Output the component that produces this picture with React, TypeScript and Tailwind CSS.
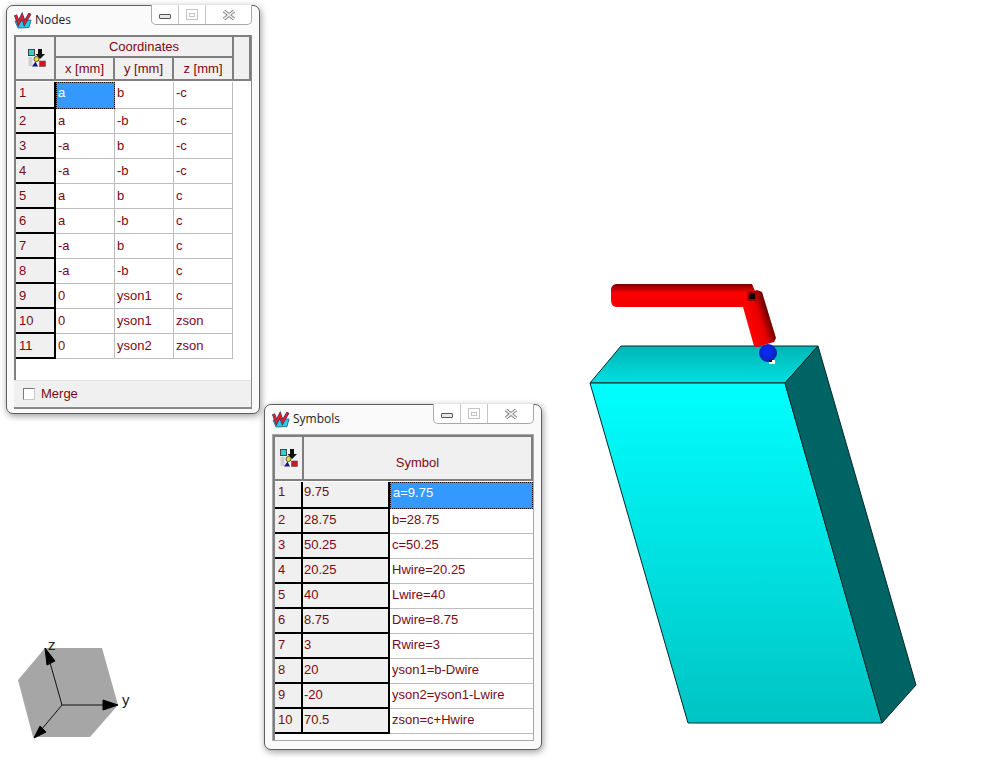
import type { ReactNode } from "react";

const nodes = [
  ["a", "b", "-c"],
  ["a", "-b", "-c"],
  ["-a", "b", "-c"],
  ["-a", "-b", "-c"],
  ["a", "b", "c"],
  ["a", "-b", "c"],
  ["-a", "b", "c"],
  ["-a", "-b", "c"],
  ["0", "yson1", "c"],
  ["0", "yson1", "zson"],
  ["0", "yson2", "zson"],
];

const symbols = [
  ["9.75", "a=9.75"],
  ["28.75", "b=28.75"],
  ["50.25", "c=50.25"],
  ["20.25", "Hwire=20.25"],
  ["40", "Lwire=40"],
  ["8.75", "Dwire=8.75"],
  ["3", "Rwire=3"],
  ["20", "yson1=b-Dwire"],
  ["-20", "yson2=yson1-Lwire"],
  ["70.5", "zson=c+Hwire"],
];

function AppIcon() {
  return (
    <svg width="18" height="17" viewBox="0 0 18 17" className="shrink-0">
      <path d="M1 9 L17 8 L15 15.5 L4 16 Z" fill="#2ccbe0" stroke="#0b5f78" strokeWidth="0.8" />
      <path d="M1.5 3 L4.5 11 L8 4 L10.5 11 L16 1.5" fill="none" stroke="#16306e" strokeWidth="3.2" />
      <path d="M1.5 3 L4.5 11 L8 4 L10.5 11 L16 1.5" fill="none" stroke="#d8232c" strokeWidth="2.2" />
    </svg>
  );
}

function GridIcon() {
  return (
    <svg width="18" height="18" viewBox="0 0 18 18">
      <rect x="0.5" y="0.5" width="6" height="6" fill="#2fd0d0" stroke="#444" />
      <rect x="0.5" y="8" width="4" height="9" fill="#cfcfcf" />
      <path d="M10 0 H14 V5 H17 L12 10 L7.5 5 H10 Z" fill="#111" />
      <circle cx="8.5" cy="10" r="2.5" fill="#e6e23a" stroke="#333" strokeWidth="0.8" />
      <path d="M4 17.5 L7.5 12.5 L10 17.5 Z" fill="#16168c" />
      <rect x="11.5" y="12" width="6" height="5.5" fill="#d01420" stroke="#555" strokeWidth="0.6" />
    </svg>
  );
}

function CaptionButtons({ className }: { className: string }) {
  return (
    <div className={`absolute top-[-1px] flex h-[20px] w-[101px] rounded-b-[5px] border border-t-0 border-[#a9a9a9] bg-white ${className}`}>
      <div className="flex w-[27px] items-center justify-center border-r border-[#c6c6c6]">
        <div className="mt-[3px] h-[5px] w-[12px] rounded-[1px] border border-[#555] bg-[#e8e8e8]" />
      </div>
      <div className="flex w-[27px] items-center justify-center border-r border-[#c6c6c6]">
        <div className="flex h-[11px] w-[12px] items-center justify-center border border-[#c4c4c4]">
          <div className="h-[4px] w-[6px] border border-[#c4c4c4]" />
        </div>
      </div>
      <div className="flex flex-1 items-center justify-center">
        <svg width="14" height="12" viewBox="0 0 14 12">
          <path d="M2 2 L12 10 M12 2 L2 10" stroke="#6d6d6d" strokeWidth="3.4" />
          <path d="M2 2 L12 10 M12 2 L2 10" stroke="#ececec" strokeWidth="1.8" />
        </svg>
      </div>
    </div>
  );
}

function Window({ title, className, buttons, children }: { title: string; className: string; buttons: string; children: ReactNode }) {
  return (
    <div className={`absolute flex flex-col rounded-[7px] border border-[#5f5f5f] bg-[#fafafa] px-[7px] shadow-[1px_2px_7px_rgba(0,0,0,0.4)] ${className}`}>
      <CaptionButtons className={buttons} />
      <div className="flex h-[29px] shrink-0 items-center gap-[3px] pb-[1px] font-['Open_Sans',sans-serif] text-[12px] text-[#222]">
        <AppIcon />
        <span>{title}</span>
      </div>
      {children}
    </div>
  );
}

function HeadCell({ className, children }: { className: string; children?: ReactNode }) {
  return <div className={`flex items-center justify-center bg-[#f0f0f0] ${className}`}>{children}</div>;
}

function Cell({ className, selected, children }: { className: string; selected?: boolean; children: ReactNode }) {
  return (
    <div
      className={`flex h-full items-center ${className} ${
        selected ? "border border-dotted border-black bg-[#3399ff] text-white" : ""
      }`}
    >
      {children}
    </div>
  );
}

function NodesWindow() {
  return (
    <Window title="Nodes" className="left-[6px] top-[5px] h-[409px] w-[254px]" buttons="left-[144px]">
      <div className="flex h-[374px] flex-col border-b-2 border-r border-[#8a8a8a] bg-white">
        <div className="flex h-[46px] shrink-0 border-2 border-[#7f7f7f]">
          <HeadCell className="w-[40px] border-r-2 border-[#7f7f7f] pl-[3px]">
            <GridIcon />
          </HeadCell>
          <div className="flex w-[176px] flex-col">
            <HeadCell className="h-[21px] border-b-2 border-[#7f7f7f]">Coordinates</HeadCell>
            <div className="flex flex-1">
              <HeadCell className="w-[59px] border-r-2 border-[#7f7f7f]">x [mm]</HeadCell>
              <HeadCell className="w-[59px] border-r-2 border-[#7f7f7f]">y [mm]</HeadCell>
              <HeadCell className="w-[58px]">z [mm]</HeadCell>
            </div>
          </div>
          <HeadCell className="flex-1 border-l-2 border-[#7f7f7f]" />
        </div>
        <div className="flex flex-1 flex-col border-l-2 border-[#7f7f7f]">
          {nodes.map((row, i) => (
            <div key={i} className={`flex shrink-0 ${i === 0 ? "mt-[1px] h-[27px]" : "h-[25px]"}`}>
              <Cell className={`w-[40px] border-b-2 border-r-2 border-black bg-[#f0f0f0] pl-[3px] ${i === 0 ? "pb-[4px]" : ""}`}>
                {i + 1}
              </Cell>
              {row.map((value, j) => (
                <Cell
                  key={j}
                  selected={i === 0 && j === 0}
                  className={`w-[59px] border-b border-r border-[#bdbdbd] ${i === 0 ? "pb-[5px]" : ""} ${i === 0 && j === 0 ? "pl-[1px]" : "pl-[2px]"}`}
                >
                  {value}
                </Cell>
              ))}
            </div>
          ))}
        </div>
        <div className="flex h-[27px] shrink-0 items-center gap-[6px] border-t border-[#e4e4e4] bg-[#f0f0f0] pl-[9px]">
          <div className="h-[12px] w-[12px] border border-b-[#c8c8c8] border-l-[#7a7a7a] border-r-[#c8c8c8] border-t-[#7a7a7a] bg-white" />
          <span>Merge</span>
        </div>
      </div>
    </Window>
  );
}

function SymbolsWindow() {
  return (
    <Window title="Symbols" className="left-[264px] top-[404px] h-[346px] w-[278px]" buttons="left-[168px]">
      <div className="flex h-[307px] flex-col border border-[#a8a8a8] bg-white">
        <div className="flex h-[46px] shrink-0 border-2 border-[#7f7f7f]">
          <HeadCell className="w-[27px]">
            <GridIcon />
          </HeadCell>
          <HeadCell className="flex-1 items-end border-l-2 border-[#7f7f7f] pb-[7px]">Symbol</HeadCell>
        </div>
        <div className="flex flex-1 flex-col border-l-2 border-[#7f7f7f]">
          {symbols.map((row, i) => (
            <div key={i} className={`flex shrink-0 ${i === 0 ? "mt-[1px] h-[27px]" : "h-[25px]"}`}>
              <Cell className={`w-[28px] border-b-2 border-r-2 border-black bg-[#f0f0f0] pl-[3px] ${i === 0 ? "pb-[5px]" : "pb-[1px]"}`}>
                {i + 1}
              </Cell>
              <Cell className={`w-[87px] border-b-2 border-r-2 border-black bg-[#f0f0f0] pl-[1px] ${i === 0 ? "pb-[5px]" : "pb-[1px]"}`}>
                {row[0]}
              </Cell>
              <Cell selected={i === 0} className={`flex-1 border-b border-[#bdbdbd] pl-[2px] ${i === 0 ? "pb-[6px]" : "pb-[2px]"}`}>
                {row[1]}
              </Cell>
            </div>
          ))}
        </div>
      </div>
    </Window>
  );
}

function Scene() {
  return (
    <svg width="1007" height="768" viewBox="0 0 1007 768" className="absolute left-0 top-0">
      <defs>
        <linearGradient id="front" x1="0" y1="383" x2="0" y2="723" gradientUnits="userSpaceOnUse">
          <stop offset="0" stopColor="#00ffff" />
          <stop offset="1" stopColor="#00c4c4" />
        </linearGradient>
        <linearGradient id="top" x1="0" y1="346" x2="0" y2="383" gradientUnits="userSpaceOnUse">
          <stop offset="0" stopColor="#00b4b4" />
          <stop offset="1" stopColor="#00e0e0" />
        </linearGradient>
        <linearGradient id="wire" x1="0" y1="284" x2="0" y2="307" gradientUnits="userSpaceOnUse">
          <stop offset="0" stopColor="#7a0000" />
          <stop offset="0.4" stopColor="#ff0000" />
          <stop offset="1" stopColor="#ee0000" />
        </linearGradient>
        <linearGradient id="wire2" x1="749" y1="322" x2="771" y2="315" gradientUnits="userSpaceOnUse">
          <stop offset="0" stopColor="#ff0000" />
          <stop offset="0.5" stopColor="#e80000" />
          <stop offset="1" stopColor="#500000" />
        </linearGradient>
        <radialGradient id="ball" cx="0.45" cy="0.45" r="0.6">
          <stop offset="0" stopColor="#0a2cff" />
          <stop offset="1" stopColor="#0a22b0" />
        </radialGradient>
      </defs>

      <path d="M621 346 L818 346 L785 383 L590 383 Z" fill="url(#top)" stroke="#052a2a" strokeWidth="1" />
      <path d="M590 383 L785 383 L882 723 L688 723 Z" fill="url(#front)" stroke="#052a2a" strokeWidth="1" />
      <path d="M818 346 L916 685 L882 723 L785 383 Z" fill="#006464" stroke="#052a2a" strokeWidth="1" />

      <circle cx="768" cy="353" r="9" fill="url(#ball)" />
      <rect x="769" y="360" width="6" height="4" fill="#fff" />
      <rect x="769" y="360" width="3" height="2" fill="#111" />

      <path d="M616 284 H752 L755 291 L746 307 H616 Q611 306 611 300 V290 Q611 285 616 284 Z" fill="url(#wire)" />
      <path d="M743 307 L747 293 L757 290 L762 292 L776 338 L774 342 L757 347 L754 346 Z" fill="url(#wire2)" />
      <rect x="747" y="291" width="9" height="10" fill="#a00000" />
      <rect x="749" y="293" width="6" height="6" fill="#0c0000" />

      <path d="M45 648 H102 L118 705 L90 737 H33 L18 680 Z" fill="#a6a6a6" />
      <path d="M62 705 L47 652 M62 705 H114 M62 705 L36 736" stroke="#111" strokeWidth="1" />
      <path d="M45 648 L55 661 L47 665 Z" fill="#000" stroke="#000" strokeLinejoin="round" />
      <path d="M118 705 L103 700 L103 710 Z" fill="#000" stroke="#000" strokeLinejoin="round" />
      <path d="M34 738 L40 726 L46 732 Z" fill="#000" stroke="#000" strokeLinejoin="round" />
    </svg>
  );
}

export default function App() {
  return (
    <div className="relative h-[768px] w-[1007px] overflow-hidden bg-white font-['Liberation_Sans',sans-serif] text-[13px] text-[#7a0a14]">
      <Scene />
      <span className="absolute left-[48px] top-[636px] text-[15px] leading-[18px] text-[#222]">z</span>
      <span className="absolute left-[122px] top-[691px] text-[15px] leading-[18px] text-[#222]">y</span>
      <NodesWindow />
      <SymbolsWindow />
    </div>
  );
}
